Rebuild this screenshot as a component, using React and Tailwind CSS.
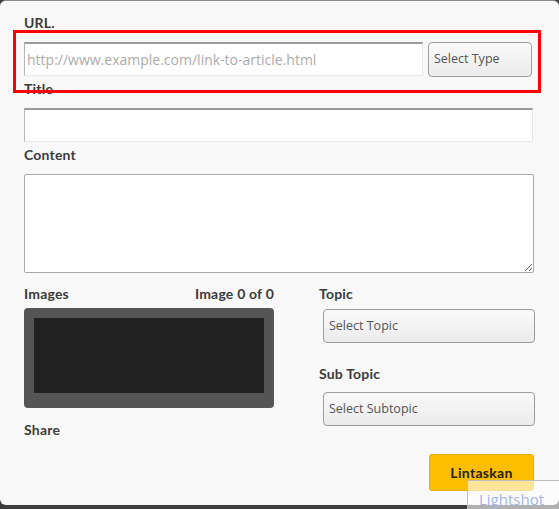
import { useState } from 'react';

const label = "block text-[14px] leading-4 font-bold tracking-[0.2px] text-[#3b3b3b] font-['Lato',sans-serif]";
const field =
  "block h-[34px] bg-white border-t-2 border-t-[#9a9a9a] border-l border-l-[#b5b5b5] border-r border-b border-r-[#e8e8e8] border-b-[#e8e8e8] px-[2px] text-[14px] text-[#555] outline-none placeholder:text-[#ababab] font-['Open_Sans',sans-serif]";
const selectBtn =
  "flex items-center h-[34px] rounded-[4px] border border-[#9c9c9c] bg-gradient-to-b from-[#f9f9f9] to-[#ebebeb] px-[5px] text-[12.5px] text-[#555] font-['Open_Sans',sans-serif] text-left";

export default function App() {
  const [url, setUrl] = useState('');
  const [title, setTitle] = useState('');
  const [content, setContent] = useState('');

  return (
    <div className="relative w-[559px] h-[509px] overflow-hidden bg-[#3d3d3d]">
      <div className="h-[505px] bg-[#f8f8f8] border-t border-[#8c8c8c] rounded-md pl-[24px] pt-[14px]">
        <label className={label}>URL.</label>
        <div className="flex items-start gap-[5px] mt-[11px] w-[508px]">
          <input
            value={url}
            onChange={e => setUrl(e.target.value)}
            placeholder="http://www.example.com/link-to-article.html"
            className={field + ' flex-1 min-w-0'}
          />
          <button className={selectBtn + ' w-[104px] h-[35px] shrink-0'}>Select Type</button>
        </div>

        <label className={label + ' mt-[4px]'}>Title</label>
        <input value={title} onChange={e => setTitle(e.target.value)} className={field + ' mt-[11px] w-[509px]'} />

        <label className={label + ' mt-[5px]'}>Content</label>
        <textarea
          value={content}
          onChange={e => setContent(e.target.value)}
          className="block w-[510px] h-[99px] mt-[11px] bg-white border border-[#a9a9a9] rounded-[2px] outline-none"
        />

        <div className="flex mt-[13px]">
          <div className="w-[250px] shrink-0">
            <div className={label + ' flex justify-between'}>
              <span>Images</span>
              <span>Image 0 of 0</span>
            </div>
            <div className="mt-[6px] h-[100px] rounded-[4px] bg-[#555] pt-[10px] px-[10px]">
              <div className="h-[75px] bg-[#222]" />
            </div>
            <label className={label + ' mt-[14px]'}>Share</label>
          </div>

          <div className="ml-[45px] w-[216px] shrink-0">
            <label className={label}>Topic</label>
            <button className={selectBtn + ' mt-[7px] ml-[4px] w-[212px]'}>Select Topic</button>
            <label className={label + ' mt-[23px]'}>Sub Topic</label>
            <button className={selectBtn + ' mt-[10px] ml-[4px] w-[212px]'}>Select Subtopic</button>
            <div className="flex justify-end mt-[28px] pr-[1px]">
              <button className="w-[105px] h-[37px] rounded-[3px] bg-[#fdbe00] border border-[#e9ae00] text-[14px] tracking-[0.3px] font-bold text-[#222] font-['Lato',sans-serif]">
                Lintaskan
              </button>
            </div>
          </div>
        </div>
      </div>

      {/* annotation box drawn over the URL row */}
      <div className="absolute left-[13px] top-[30px] w-[528px] h-[63px] border-[3px] border-[#ff0000] pointer-events-none" />

      {/* Lightshot watermark */}
      <div className="absolute left-[467px] top-[480px] w-[100px] h-[32px] bg-white/60 border border-[#bdbdbd] pl-[11px] pt-[8px] text-[15px] leading-5 text-[#a3b5e3] font-['Open_Sans',sans-serif]">
        Lightshot
      </div>
    </div>
  );
}
